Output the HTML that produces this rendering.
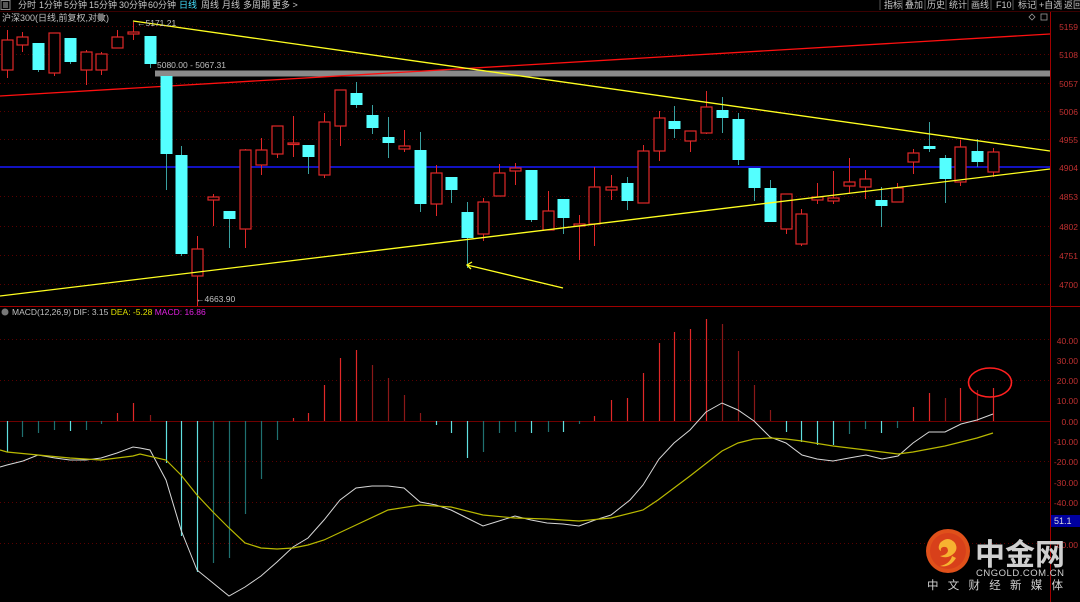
<!DOCTYPE html>
<html><head><meta charset="utf-8"><style>
html,body{margin:0;padding:0;background:#000;width:1080px;height:602px;overflow:hidden}
svg{display:block}
text{font-family:"Liberation Sans","Noto Sans CJK SC",sans-serif}
</style></head><body>
<svg id="s" width="1080" height="602" viewBox="0 0 1080 602" xmlns="http://www.w3.org/2000/svg">
<rect width="1080" height="602" fill="#000"/>
<line x1="0" y1="11.5" x2="1080" y2="11.5" stroke="#3a0000"/>
<rect x="1" y="0.5" width="9" height="9" fill="none" stroke="#888"/>
<rect x="3" y="2" width="5" height="6" fill="#555"/>
<g font-size="9" fill="#c8c8c8">
<text x="18" y="8">分时</text><text x="39" y="8">1分钟</text><text x="64" y="8">5分钟</text><text x="89" y="8">15分钟</text><text x="119" y="8">30分钟</text><text x="148" y="8">60分钟</text>
<text x="179" y="8" fill="#44e0ff">日线</text><text x="201" y="8">周线</text><text x="222" y="8">月线</text><text x="243" y="8">多周期</text><text x="272" y="8">更多 &gt;</text>
<text x="884" y="8">指标</text><text x="905" y="8">叠加</text><text x="927" y="8">历史</text><text x="949" y="8">统计</text><text x="971" y="8">画线</text><text x="996" y="8">F10</text><text x="1018" y="8">标记</text><text x="1039" y="8">+自选</text><text x="1064" y="8">返回</text>
</g>
<g stroke="#555"><line x1="880" y1="0" x2="880" y2="10"/><line x1="902" y1="0" x2="902" y2="10"/><line x1="925" y1="0" x2="925" y2="10"/><line x1="946" y1="0" x2="946" y2="10"/><line x1="968" y1="0" x2="968" y2="10"/><line x1="991" y1="0" x2="991" y2="10"/><line x1="1013" y1="0" x2="1013" y2="10"/><line x1="1036" y1="0" x2="1036" y2="10"/><line x1="1061" y1="0" x2="1061" y2="10"/></g>
<text x="2" y="21" font-size="9" fill="#c0c0c0">沪深300(日线,前复权,对数)</text>
<circle cx="101" cy="17" r="3.5" fill="#777"/>
<path d="M1032 14 l3 3 -3 3 -3 -3z" fill="none" stroke="#999" stroke-width="0.8"/>
<rect x="1041" y="14" width="6" height="6" fill="none" stroke="#999" stroke-width="0.8"/>
<g stroke="#5a0000" stroke-dasharray="1,3" stroke-width="1">
<line x1="0" y1="26.5" x2="1050" y2="26.5"/><line x1="0" y1="54.5" x2="1050" y2="54.5"/><line x1="0" y1="83.5" x2="1050" y2="83.5"/><line x1="0" y1="111.5" x2="1050" y2="111.5"/><line x1="0" y1="139.5" x2="1050" y2="139.5"/><line x1="0" y1="196.5" x2="1050" y2="196.5"/><line x1="0" y1="226.5" x2="1050" y2="226.5"/><line x1="0" y1="255.5" x2="1050" y2="255.5"/><line x1="0" y1="284.5" x2="1050" y2="284.5"/>
<line x1="0" y1="339.5" x2="1050" y2="339.5"/><line x1="0" y1="380.5" x2="1050" y2="380.5"/><line x1="0" y1="461.5" x2="1050" y2="461.5"/><line x1="0" y1="502.5" x2="1050" y2="502.5"/><line x1="0" y1="543.5" x2="1050" y2="543.5"/>
</g>
<line x1="0" y1="421.5" x2="1050" y2="421.5" stroke="#700000"/>
<line x1="0" y1="306.5" x2="1080" y2="306.5" stroke="#a00000"/>
<line x1="1050.5" y1="12" x2="1050.5" y2="602" stroke="#a00000"/>
<g font-size="8.5" fill="#c03030" text-anchor="end">
<text x="1078" y="30">5159</text><text x="1078" y="58">5108</text><text x="1078" y="87">5057</text><text x="1078" y="115">5006</text><text x="1078" y="143">4955</text><text x="1078" y="171">4904</text><text x="1078" y="200">4853</text><text x="1078" y="230">4802</text><text x="1078" y="259">4751</text><text x="1078" y="288">4700</text>
<text x="1078" y="344">40.00</text><text x="1078" y="364">30.00</text><text x="1078" y="384">20.00</text><text x="1078" y="404">10.00</text><text x="1078" y="425">0.00</text><text x="1078" y="445">-10.00</text><text x="1078" y="465">-20.00</text><text x="1078" y="486">-30.00</text><text x="1078" y="506">-40.00</text><text x="1078" y="548">-60.00</text>
</g>
<rect x="1051" y="515" width="29" height="12" fill="#0000a0"/>
<text x="1054" y="524" font-size="9" fill="#ddd">51.1</text>
<rect x="155" y="70.5" width="895" height="6" fill="#8a8a8a"/>
<text x="157" y="68" font-size="8.5" fill="#c0c0c0">5080.00 - 5067.31</text>
<line x1="0" y1="96" x2="1050" y2="34" stroke="#ff1010" stroke-width="1.3"/>
<line x1="0" y1="167" x2="1050" y2="167" stroke="#1818ff" stroke-width="1.5"/>
<g id="candles"></g>
<line x1="133" y1="21" x2="1050" y2="151" stroke="#ffff20" stroke-width="1.3"/>
<line x1="0" y1="296" x2="1050" y2="169" stroke="#ffff20" stroke-width="1.3"/>
<line x1="467" y1="265" x2="563" y2="288" stroke="#ffff20" stroke-width="1.3"/>
<path d="M472 262 L467 265 L471 269" fill="none" stroke="#ffff20" stroke-width="1.3"/>
<text x="137" y="26" font-size="8.5" fill="#c0c0c0">←5171.21</text>
<text x="196" y="302" font-size="8.5" fill="#c0c0c0">←4663.90</text>
<circle cx="5" cy="312" r="3.5" fill="#777"/>
<text x="12" y="315" font-size="8.5" fill="#c0c0c0">MACD(12,26,9) DIF: 3.15 <tspan fill="#e0e000">DEA: -5.28</tspan> <tspan fill="#e020e0">MACD: 16.86</tspan></text>
<g id="bars"></g>
<polyline id="dif" fill="none" stroke="#d8d8d8" stroke-width="1"/>
<polyline id="dea" fill="none" stroke="#b8b800" stroke-width="1.2"/>
<ellipse cx="990" cy="382.5" rx="21.5" ry="14.5" fill="none" stroke="#ff2020" stroke-width="1.6"/>
<circle cx="948" cy="551" r="22" fill="#e0501a"/>
<circle cx="948" cy="551" r="18" fill="#d8401a"/>
<path d="M940 543 q8 -8 15 0 q4 7 -3 12 q-6 4 -12 1 q7 -1 8 -5 q0 -5 -5 -4 q-3 1 -2 4 q-4 -2 -1 -8z" fill="#f7b230"/>
<path d="M952 556 q-2 8 -12 10 q10 2 16 -8z" fill="#f7b230"/>
<text x="975" y="565" font-size="30" font-weight="bold" fill="#d0d0d0" textLength="90" font-family="'Noto Sans CJK SC',sans-serif">中金网</text>
<text x="976" y="576" font-size="9.5" fill="#d0d0d0" textLength="88">CNGOLD.COM.CN</text>
<text x="927" y="589" font-size="11.5" fill="#d0d0d0" textLength="136">中文财经新媒体</text>
</svg>
<script>
var C=[[7,1,40,70,30,78],[22,1,37,45,32,52],[38,0,43,70,43,72],[54,1,33,73,33,76],[70,0,38,62,38,64],[86,1,52,70,50,85],[101,1,54,70,52,75],[117,1,37,48,30,48],[133,1,32,34,22,40],[150,0,36,64,36,68],
[166,0,76,154,76,190],[181,0,155,254,146,256],[197,1,249,276,236,306],[213,1,197,200,194,226],[229,0,211,219,211,248],[245,1,150,229,149,248],[261,1,150,165,138,175],[277,1,126,154,126,158],[293,1,143,144,116,157],[308,0,145,157,145,174],[324,1,122,175,113,178],[340,1,90,126,90,146],[356,0,93,105,82,108],[372,0,115,128,105,134],[388,0,137,143,117,158],[404,1,146,149,130,152],[420,0,150,204,132,212],[436,1,173,204,165,216],[451,0,177,190,177,203],[467,0,212,238,202,268],[483,1,202,234,198,241],[499,1,173,196,164,196],[515,1,168,171,163,185],[531,0,170,220,170,222],
[548,1,211,230,191,230],[563,0,199,218,199,234],[579,1,224,226,215,260],[594,1,187,224,167,246],[611,1,187,190,175,200],[627,0,183,201,177,210],[643,1,151,203,145,203],[659,1,118,151,111,161],[674,0,121,129,106,138],[690,1,131,141,131,152],[706,1,107,133,91,134],[722,0,110,118,97,133],[738,0,119,160,113,165],[754,0,168,188,168,201],[770,0,188,222,180,222],[786,1,194,229,194,234],[801,1,214,244,209,246],[817,1,197,200,183,204],[833,1,198,201,171,204],[849,1,182,186,158,194],[865,1,179,187,170,199],[881,0,200,206,187,227],[897,1,188,202,183,202],[913,1,153,162,149,174],[929,0,146,149,122,152],[945,0,158,179,155,203],[960,1,147,182,140,186],[977,0,151,162,139,167],[993,1,152,172,148,177]];
var g=document.getElementById("candles"),h="";
C.forEach(function(c){var col=c[1]?"#e02828":"#54ffff";var wc=c[1]?"#e02828":"#3aa0a0";
h+='<line x1="'+(c[0]+.5)+'" y1="'+c[4]+'" x2="'+(c[0]+.5)+'" y2="'+c[5]+'" stroke="'+wc+'"/>';
var bh=Math.max(c[3]-c[2],1.5);
if(c[1])h+='<rect x="'+(c[0]-5)+'" y="'+c[2]+'" width="11" height="'+bh+'" fill="#000" stroke="'+col+'" stroke-width="1.2"/>';
else h+='<rect x="'+(c[0]-5.5)+'" y="'+c[2]+'" width="12" height="'+bh+'" fill="'+col+'"/>';});
g.innerHTML=h;
var B=[[7,452],[22,437],[38,433],[54,430],[70,431],[86,430],[101,424],[117,413],[133,403],[150,415],[166,463],[181,536],[197,572],[213,563],[229,558],[245,514],[261,479],[277,440],[293,418],[308,413],[324,385],[340,358],[356,350],[372,365],[388,378],[404,395],[420,413],[436,425],[451,433],[467,458],[483,452],[499,433],[515,432],[531,433],[548,432],[563,432],[579,424],[594,416],[611,400],[627,398],[643,373],[659,343],[674,332],[690,329],[706,319],[722,324],[738,351],[754,385],[770,410],[786,432],[801,442],[817,445],[833,445],[849,434],[865,429],[881,433],[897,428],[913,407],[929,393],[945,398],[960,388],[977,390],[993,388]];
h="";B.forEach(function(b,i){var up=b[1]<421;var m=Math.abs(b[1]-421);var pm=i?Math.abs(B[i-1][1]-421):0;var pu=i?B[i-1][1]<421:up;var grow=(pu!==up)||m>=pm;
var col=up?(grow?"#e02828":"#8a1818"):(grow?"#60e0e0":"#1f7070");
h+='<line x1="'+(b[0]+.5)+'" y1="421" x2="'+(b[0]+.5)+'" y2="'+b[1]+'" stroke="'+col+'" stroke-width="1.2"/>';});
document.getElementById("bars").innerHTML=h;
document.getElementById("dif").setAttribute("points","0,467 7,465 23,461 38,455 55,458 70,460 86,460 101,458 117,453 133,447 140,448 150,450 166,480 181,530 197,570 213,583 229,596 245,587 261,576 277,562 293,547 308,538 324,520 340,500 356,488 372,486 388,486 404,488 420,502 436,505 451,510 467,518 483,526 499,521 515,516 531,520 547,523 563,524 579,526 595,520 611,515 630,500 643,485 659,459 674,443 690,430 706,412 722,403 738,410 754,421 770,437 786,443 802,455 817,459 833,461 849,458 866,455 882,459 898,456 913,443 929,432 945,432 961,424 977,420 993,414");
document.getElementById("dea").setAttribute("points","0,450 7,452 38,455 70,458 101,460 133,456 140,454 166,460 181,475 197,495 213,512 229,528 245,543 261,548 277,549 293,548 308,545 324,540 356,525 388,510 420,505 451,507 483,515 515,518 547,519 579,521 611,518 643,510 658,500 690,476 722,451 738,443 754,439 770,438 786,439 802,441 833,446 866,450 898,454 913,452 945,446 977,438 993,433");
</script>
</body></html>
